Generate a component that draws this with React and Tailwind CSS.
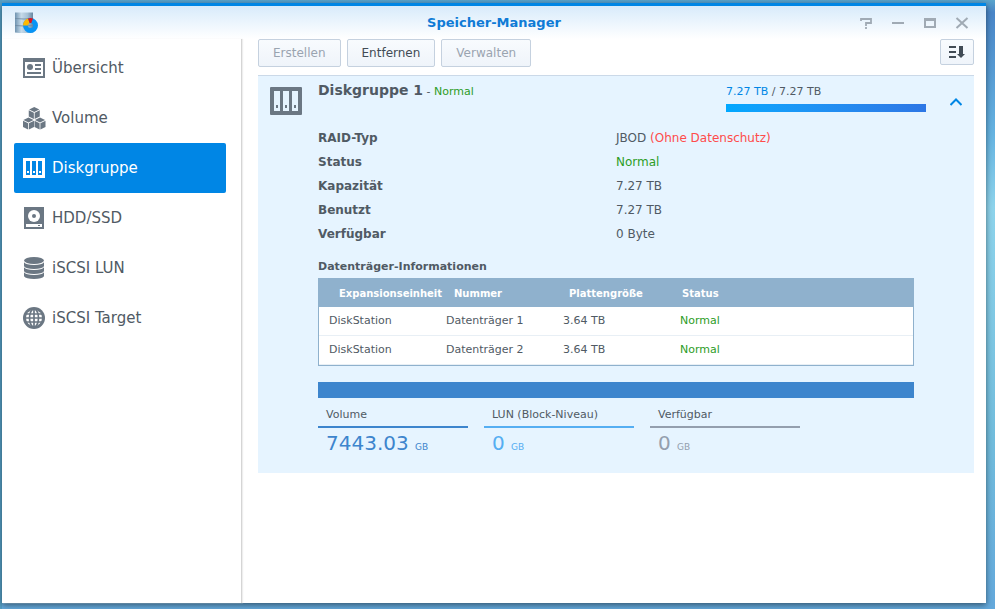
import React, { useState } from "react";

const navItems = [
  { id: "overview", title: "Übersicht", Icon: OverviewIcon },
  { id: "volume", title: "Volume", Icon: VolumeIcon },
  { id: "diskgroup", title: "Diskgruppe", Icon: DiskGroupIcon },
  { id: "hdd", title: "HDD/SSD", Icon: HddIcon },
  { id: "lun", title: "iSCSI LUN", Icon: LunIcon },
  { id: "target", title: "iSCSI Target", Icon: TargetIcon },
];

const details = [
  { label: "RAID-Typ", value: "JBOD", note: "(Ohne Datenschutz)" },
  { label: "Status", value: "Normal", ok: true },
  { label: "Kapazität", value: "7.27 TB" },
  { label: "Benutzt", value: "7.27 TB" },
  { label: "Verfügbar", value: "0 Byte" },
];

const disks = [
  { unit: "DiskStation", number: "Datenträger 1", size: "3.64 TB", status: "Normal" },
  { unit: "DiskStation", number: "Datenträger 2", size: "3.64 TB", status: "Normal" },
];

const usage = [
  { label: "Volume", value: "7443.03", line: "border-[#3d85cd]", text: "text-[#3d85cd]" },
  { label: "LUN (Block-Niveau)", value: "0", line: "border-[#55aef2]", text: "text-[#55aef2]" },
  { label: "Verfügbar", value: "0", line: "border-[#949fae]", text: "text-[#949fae]" },
];

function AppLogo() {
  return (
    <svg width="24" height="24" viewBox="0 0 24 24" aria-hidden="true">
      <defs>
        <linearGradient id="metal" x1="0" x2="1" y1="0" y2="0">
          <stop offset="0" stopColor="#6f93b0" />
          <stop offset="0.35" stopColor="#c6dae9" />
          <stop offset="0.7" stopColor="#a5c0d5" />
          <stop offset="1" stopColor="#6686a1" />
        </linearGradient>
      </defs>
      <path d="M1 1.500h18v20q-9 1-18 0z" fill="url(#metal)" />
      <path d="M1 7.500q9 1 18 0M1 14.500q9 1 18 0" stroke="#6c879e" strokeWidth="0.8" fill="none" />
      <circle cx="16.500" cy="14.500" r="5" fill="none" stroke="#0894f5" strokeWidth="5" />
      <path d="M9 14.500A7.500 7.500 0 0 1 14 7.400L15.700 12.200A2.500 2.500 0 0 0 14 14.500z" fill="#ffb800" />
      <path d="M14 7.400A7.500 7.500 0 0 1 19 7.400L17.300 12.100H15.700z" fill="#e0141c" />
    </svg>
  );
}

function OverviewIcon() {
  return (
    <svg width="24" height="24" viewBox="0 0 24 24" aria-hidden="true">
      <path d="M1 2h22v20H1z" fill="currentColor" />
      <path d="M3 6h18v14H3z" fill="#fff" />
      <circle cx="8" cy="11" r="3" fill="currentColor" />
      <path d="M13 9h6M13 13h6M5 17h14" stroke="currentColor" strokeWidth="2" />
    </svg>
  );
}

function Cube({ x, y }) {
  return (
    <g transform={`translate(${x} ${y})`} fill="currentColor">
      <path d="M5.500 0L10.600 2.400L5.500 4.900L0.400 2.400z" />
      <path d="M0 3.200L5.100 5.700V12L0 9.500z" />
      <path d="M11 3.200L5.900 5.700V12L11 9.500z" />
    </g>
  );
}

function VolumeIcon() {
  return (
    <svg width="24" height="24" viewBox="0 0 24 24" aria-hidden="true">
      <Cube x={6.75} y={1} />
      <Cube x={1} y={11.5} />
      <Cube x={12.5} y={11.5} />
    </svg>
  );
}

function DiskGroupIcon() {
  return (
    <svg width="24" height="24" viewBox="0 0 24 24" aria-hidden="true">
      <path
        fill="currentColor"
        fillRule="evenodd"
        d="M1 2h22v20H1zM4 5v14h4V5zM10 5v14h4V5zM16 5v14h4V5z"
      />
      <path fill="currentColor" d="M5 15h2v2H5zM11 15h2v2h-2zM17 15h2v2h-2z" />
    </svg>
  );
}

function HddIcon() {
  return (
    <svg width="24" height="24" viewBox="0 0 24 24" aria-hidden="true">
      <rect x="2" y="1" width="20" height="22" fill="currentColor" />
      <circle cx="12" cy="10" r="6" fill="#fff" />
      <circle cx="12" cy="10" r="2" fill="currentColor" />
      <path d="M4 18h16v3H4z" fill="#fff" />
      <path d="M16 19h2v1h-2z" fill="currentColor" />
    </svg>
  );
}

function LunIcon() {
  return (
    <svg width="24" height="24" viewBox="0 0 24 24" aria-hidden="true" fill="currentColor">
      <ellipse cx="12" cy="4.500" rx="10" ry="3.500" />
      <path d="M2 6.300q2 2.700 10 2.700t10-2.700v4q-2 2.700-10 2.700T2 10.300z" />
      <path d="M2 11.300q2 2.700 10 2.700t10-2.700v4q-2 2.700-10 2.700T2 15.300z" />
      <path d="M2 16.300q2 2.700 10 2.700t10-2.700v4q-2 2.700-10 2.700T2 20.300z" />
    </svg>
  );
}

function TargetIcon() {
  return (
    <svg width="24" height="24" viewBox="0 0 24 24" aria-hidden="true">
      <circle cx="12" cy="12" r="11" fill="currentColor" />
      <circle cx="12" cy="12" r="8" fill="#fff" />
      <g fill="none" stroke="currentColor" strokeWidth="1.700">
        <path d="M12 3v18M3 12h18M4 8h16M4 16h16" />
        <ellipse cx="12" cy="12" rx="4.500" ry="9" />
      </g>
    </svg>
  );
}

function GroupIcon() {
  return (
    <svg width="32" height="28" viewBox="0 0 32 28" className="text-[#6b7783]" aria-hidden="true">
      <rect width="32" height="28" rx="1" fill="currentColor" />
      <path d="M4 4h6v20H4zM13 4h6v20h-6zM22 4h6v20h-6z" fill="#e6f4ff" />
      <path d="M6 18h2v3H6zM15 18h2v3h-2zM24 18h2v3h-2z" fill="currentColor" />
    </svg>
  );
}

function WindowButton({ label, children }) {
  return (
    <button type="button" aria-label={label} className="text-[#a0aab4]">
      <svg width="16" height="16" viewBox="0 0 16 16" fill="none" stroke="currentColor" strokeWidth="2" aria-hidden="true">
        {children}
      </svg>
    </button>
  );
}

function ToolbarButton({ disabled, children }) {
  return (
    <button
      type="button"
      disabled={disabled}
      className="h-7 rounded-xs border border-[#c5d1df] bg-linear-to-b from-[#f8fbfe] to-[#eff4fa] px-3.5 text-[12px] text-[#414b55] disabled:text-[#9aa4b0]"
    >
      {children}
    </button>
  );
}

export default function App() {
  const [active, setActive] = useState("diskgroup");
  const [open, setOpen] = useState(true);

  return (
    <div
      className="flex h-screen flex-col overflow-hidden bg-[linear-gradient(90deg,#559fc5_2px,transparent_2px),linear-gradient(180deg,#5aa5cc,#4a86c8_2%,#66b4e2_22%,#8ed4ec_34%,#72bddd_72%,#64a9dc)] pt-[3px] pr-[9px] pb-1.5 pl-0.5 text-[12px] text-[#505a64]"
      style={{ fontFamily: '"DejaVu Sans", Verdana, sans-serif' }}
    >
      <div className="flex min-h-0 flex-1 flex-col border-t-3 border-[#0086e5] bg-white shadow-[0_2px_6px_rgba(0,0,0,0.5)]">
        <header className="grid h-[33px] shrink-0 grid-cols-[1fr_auto_1fr] items-center bg-linear-to-b from-[#d8ebfb] to-white px-3">
          <div>
            <AppLogo />
          </div>
          <h1 className="text-[13px] font-bold text-[#0f7bd6]">Speicher-Manager</h1>
          <div className="flex justify-end gap-4 pr-1">
            <WindowButton label="Hilfe">
              <path d="M3 6V4h10v4H8v3M8 12v2" strokeWidth="1.800" />
            </WindowButton>
            <WindowButton label="Minimieren">
              <path d="M2 8h12" />
            </WindowButton>
            <WindowButton label="Maximieren">
              <path d="M3 4h10v8H3zM2 5h12" />
            </WindowButton>
            <WindowButton label="Schließen">
              <path d="M2.500 3l11 10M13.500 3l-11 10" />
            </WindowButton>
          </div>
        </header>

        <div className="flex min-h-0 flex-1">
          <nav className="w-60 shrink-0 border-r border-[#d5d5d5] pt-1 pr-[15px] pl-3 shadow-[1px_0_1px_#eeeeee]">
            {navItems.map(({ id, title, Icon }) => (
              <button
                key={id}
                type="button"
                onClick={() => setActive(id)}
                className={
                  active === id
                    ? "flex h-[50px] w-full items-center gap-1.5 rounded-xs bg-[#0086e5] px-2 text-[15px] text-white"
                    : "flex h-[50px] w-full items-center gap-1.5 px-2 text-[15px] text-[#505a64]"
                }
              >
                <span className={active === id ? "text-white" : "text-[#6b7783]"}>
                  <Icon />
                </span>
                {title}
              </button>
            ))}
          </nav>

          <main className="min-w-0 flex-1 pr-3 pl-4">
            <div className="flex h-9 items-start gap-1.5">
              <ToolbarButton disabled>Erstellen</ToolbarButton>
              <ToolbarButton>Entfernen</ToolbarButton>
              <ToolbarButton disabled>Verwalten</ToolbarButton>
              <button
                type="button"
                aria-label="Sortieren"
                className="ml-auto flex h-[26px] w-[34px] items-center justify-center rounded-xs border border-[#c5d1df] bg-linear-to-b from-[#f8fbfe] to-[#eff4fa] text-[#414b55]"
              >
                <svg width="16" height="14" viewBox="0 0 16 14" aria-hidden="true">
                  <path d="M0 2h7M0 7h7M0 12h7" stroke="currentColor" strokeWidth="2" />
                  <path d="M10 1h4v8h2l-4 4-4-4h2z" fill="currentColor" />
                </svg>
              </button>
            </div>

            <section className="border-t border-[#cbd9e8] bg-[#e6f4ff] pr-[60px] pb-[15px] pl-3">
              <div className="flex">
                <div className="w-12 shrink-0 pt-[11px]">
                  <GroupIcon />
                </div>
                <h2 className="flex-1 pt-1 text-[11px] leading-5">
                  <span className="text-[14px] font-bold">Diskgruppe 1</span> -{" "}
                  <span className="text-[#2d9d1f]">Normal</span>
                </h2>
                <div className="relative w-[188px] pt-2 text-[11px] leading-4">
                  <span className="text-[#0086e5]">7.27 TB</span> / 7.27 TB
                  <div className="mt-1 h-2 w-[200px] bg-linear-to-r from-[#00a8ff] to-[#2d76e5]" />
                  <button
                    type="button"
                    aria-label="Details"
                    aria-expanded={open}
                    onClick={() => setOpen(!open)}
                    className="absolute top-5 -right-12 text-[#0086e5]"
                  >
                    <svg width="12" height="12" viewBox="0 0 12 12" aria-hidden="true">
                      <path d="M0.500 9L6 3.500L11.500 9" fill="none" stroke="currentColor" strokeWidth="2" />
                    </svg>
                  </button>
                </div>
              </div>

              {open && (
                <div className="pt-[11px] pl-12">
                  <dl>
                    {details.map((row) => (
                      <div key={row.label} className="flex h-6 items-center">
                        <dt className="w-1/2 font-bold">{row.label}</dt>
                        <dd className={row.ok ? "text-[#2d9d1f]" : ""}>
                          {row.value}
                          {row.note && <span className="text-[#ff4b4b]"> {row.note}</span>}
                        </dd>
                      </div>
                    ))}
                  </dl>

                  <h3 className="mt-[11px] h-5 text-[11px] leading-5 font-bold">Datenträger-Informationen</h3>
                  <table className="mt-px w-full table-fixed border-separate border-spacing-0 border border-[#8fb1cd] bg-white text-left text-[11px]">
                    <thead className="bg-[#8fb1cd] text-[10px] text-white">
                      <tr className="h-7">
                        <th className="w-[117px] pl-5 whitespace-nowrap">Expansionseinheit</th>
                        <th className="w-[117px] pl-[18px]">Nummer</th>
                        <th className="w-[117px] pl-4">Plattengröße</th>
                        <th className="pl-3">Status</th>
                      </tr>
                    </thead>
                    <tbody>
                      {disks.map((disk) => (
                        <tr key={disk.number} className="h-[29px] *:border-b *:border-[#e8eff5] *:pt-px *:pl-2.5">
                          <td>{disk.unit}</td>
                          <td>{disk.number}</td>
                          <td>{disk.size}</td>
                          <td className="text-[#2d9d1f]">{disk.status}</td>
                        </tr>
                      ))}
                    </tbody>
                  </table>

                  <div className="mt-4 h-4 bg-[#3d85cd]" />
                  <div className="flex gap-4">
                    {usage.map((item) => (
                      <div key={item.label} className="w-[150px]">
                        <div className={`h-[30px] border-b-2 pl-2 text-[11px] leading-[34px] ${item.line}`}>{item.label}</div>
                        <div className={`h-[30px] pl-2 text-[20px] leading-[30px] ${item.text}`}>
                          {item.value} <span className="text-[9px]">GB</span>
                        </div>
                      </div>
                    ))}
                  </div>
                </div>
              )}
            </section>
          </main>
        </div>
      </div>
    </div>
  );
}
